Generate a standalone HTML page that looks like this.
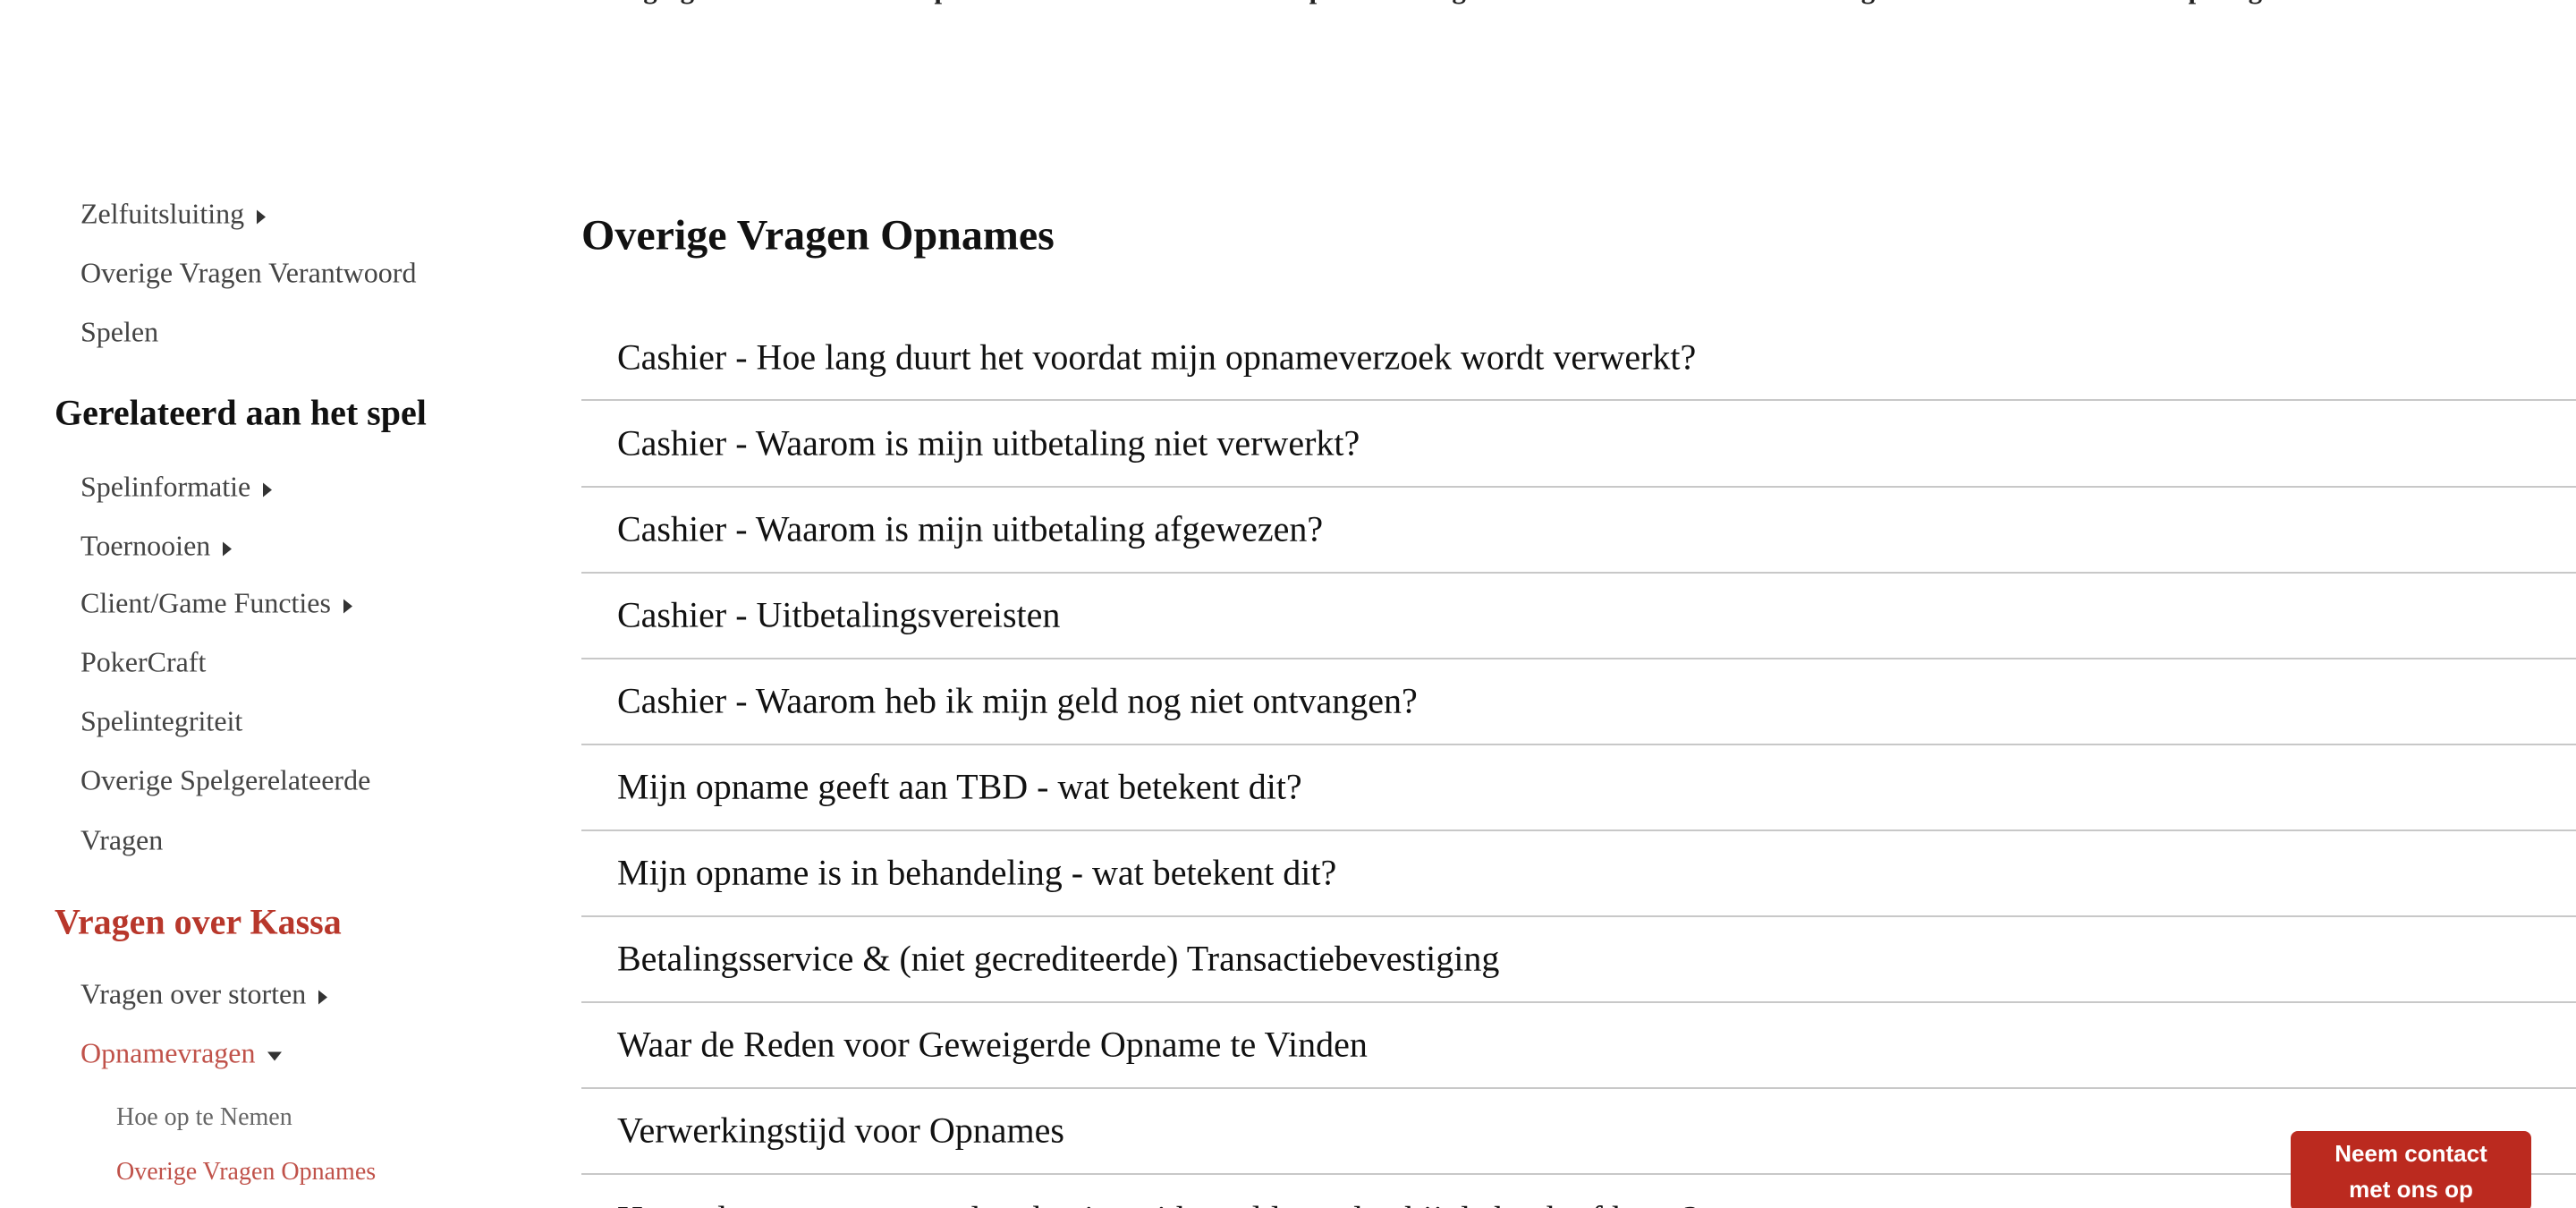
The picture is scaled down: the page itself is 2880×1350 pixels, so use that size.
<!DOCTYPE html>
<html><head><meta charset="utf-8"><style>
html,body{margin:0;padding:0;overflow:hidden;height:1350px}
#w{width:2880px;height:1350px;overflow:hidden;background:#fff;font-family:"Liberation Serif",serif;position:relative}
.a{position:absolute;white-space:nowrap}
.nav{top:-30px;font-weight:bold;font-size:31px;color:#222}
.s{font-size:32px;color:#444;left:90px;transform:translateY(-50%)}
.h{font-size:40px;font-weight:bold;color:#111;left:61px;transform:translateY(-50%)}
.ss{font-size:28px;color:#666;left:130px;transform:translateY(-50%)}
.tri{display:inline-block;width:0;height:0;border-top:8px solid transparent;border-bottom:8px solid transparent;border-left:10px solid #333;margin-left:14px;vertical-align:middle}
.dn{display:inline-block;width:0;height:0;border-left:8px solid transparent;border-right:8px solid transparent;border-top:10px solid #333;margin-left:14px;vertical-align:middle}
.it{left:690px;font-size:40px;color:#111;transform:translateY(-50%)}
.ln{position:absolute;left:650px;right:0;height:2px;background:#c8c8c8}
.btn{position:absolute;left:2561px;top:1264px;width:269px;height:90px;background:#bb2a1f;border-radius:8px;color:#fff;font-family:"Liberation Sans",sans-serif;font-weight:bold;font-size:26px;text-align:center;line-height:40px;padding-top:5px;box-sizing:border-box}
</style></head><body><div id="w">
<div class="a nav" style="left:350px">Account</div>
<div class="a nav" style="left:523px">Accountbeveiliging</div>
<div class="a nav" style="left:845px">Verantwoord Spelen</div>
<div class="a nav" style="left:1181px">Gerelateerd aan het spel</div>
<div class="a nav" style="left:1574px">Vragen over Kassa</div>
<div class="a nav" style="left:1879px">Technische Vragen</div>
<div class="a nav" style="left:2191px">Voorwaarden &amp; Bepalingen</div>

<div class="a s" style="top:239px">Zelfuitsluiting<span class="tri"></span></div>
<div class="a s" style="top:305px">Overige Vragen Verantwoord</div>
<div class="a s" style="top:371px">Spelen</div>
<div class="a h" style="top:461px">Gerelateerd aan het spel</div>
<div class="a s" style="top:544px">Spelinformatie<span class="tri"></span></div>
<div class="a s" style="top:610px">Toernooien<span class="tri"></span></div>
<div class="a s" style="top:674px">Client/Game Functies<span class="tri"></span></div>
<div class="a s" style="top:740px">PokerCraft</div>
<div class="a s" style="top:806px">Spelintegriteit</div>
<div class="a s" style="top:872px">Overige Spelgerelateerde</div>
<div class="a s" style="top:939px">Vragen</div>
<div class="a h" style="top:1030px;color:#b8372b">Vragen over Kassa</div>
<div class="a s" style="top:1111px">Vragen over storten<span class="tri"></span></div>
<div class="a s" style="top:1177px;color:#c0524a">Opnamevragen<span class="dn"></span></div>
<div class="a ss" style="top:1249px">Hoe op te Nemen</div>
<div class="a ss" style="top:1310px;color:#c0524a">Overige Vragen Opnames</div>

<div class="a" style="left:650px;top:263px;transform:translateY(-50%);font-size:48px;font-weight:bold;color:#111">Overige Vragen Opnames</div>

<div class="a it" style="top:399px">Cashier - Hoe lang duurt het voordat mijn opnameverzoek wordt verwerkt?</div>
<div class="ln" style="top:446px"></div>
<div class="a it" style="top:495px">Cashier - Waarom is mijn uitbetaling niet verwerkt?</div>
<div class="ln" style="top:543px"></div>
<div class="a it" style="top:591px">Cashier - Waarom is mijn uitbetaling afgewezen?</div>
<div class="ln" style="top:639px"></div>
<div class="a it" style="top:687px">Cashier - Uitbetalingsvereisten</div>
<div class="ln" style="top:735px"></div>
<div class="a it" style="top:783px">Cashier - Waarom heb ik mijn geld nog niet ontvangen?</div>
<div class="ln" style="top:831px"></div>
<div class="a it" style="top:879px">Mijn opname geeft aan TBD - wat betekent dit?</div>
<div class="ln" style="top:927px"></div>
<div class="a it" style="top:975px">Mijn opname is in behandeling - wat betekent dit?</div>
<div class="ln" style="top:1023px"></div>
<div class="a it" style="top:1071px">Betalingsservice &amp; (niet gecrediteerde) Transactiebevestiging</div>
<div class="ln" style="top:1119px"></div>
<div class="a it" style="top:1167px">Waar de Reden voor Geweigerde Opname te Vinden</div>
<div class="ln" style="top:1215px"></div>
<div class="a it" style="top:1263px">Verwerkingstijd voor Opnames</div>
<div class="ln" style="top:1311px"></div>
<div class="a it" style="top:1362px">Hoe zal een opname op de rekening uitbetaald worden bij de bank of kaart?</div>

<div class="btn">Neem contact<br>met ons op</div>
</div></body></html>
